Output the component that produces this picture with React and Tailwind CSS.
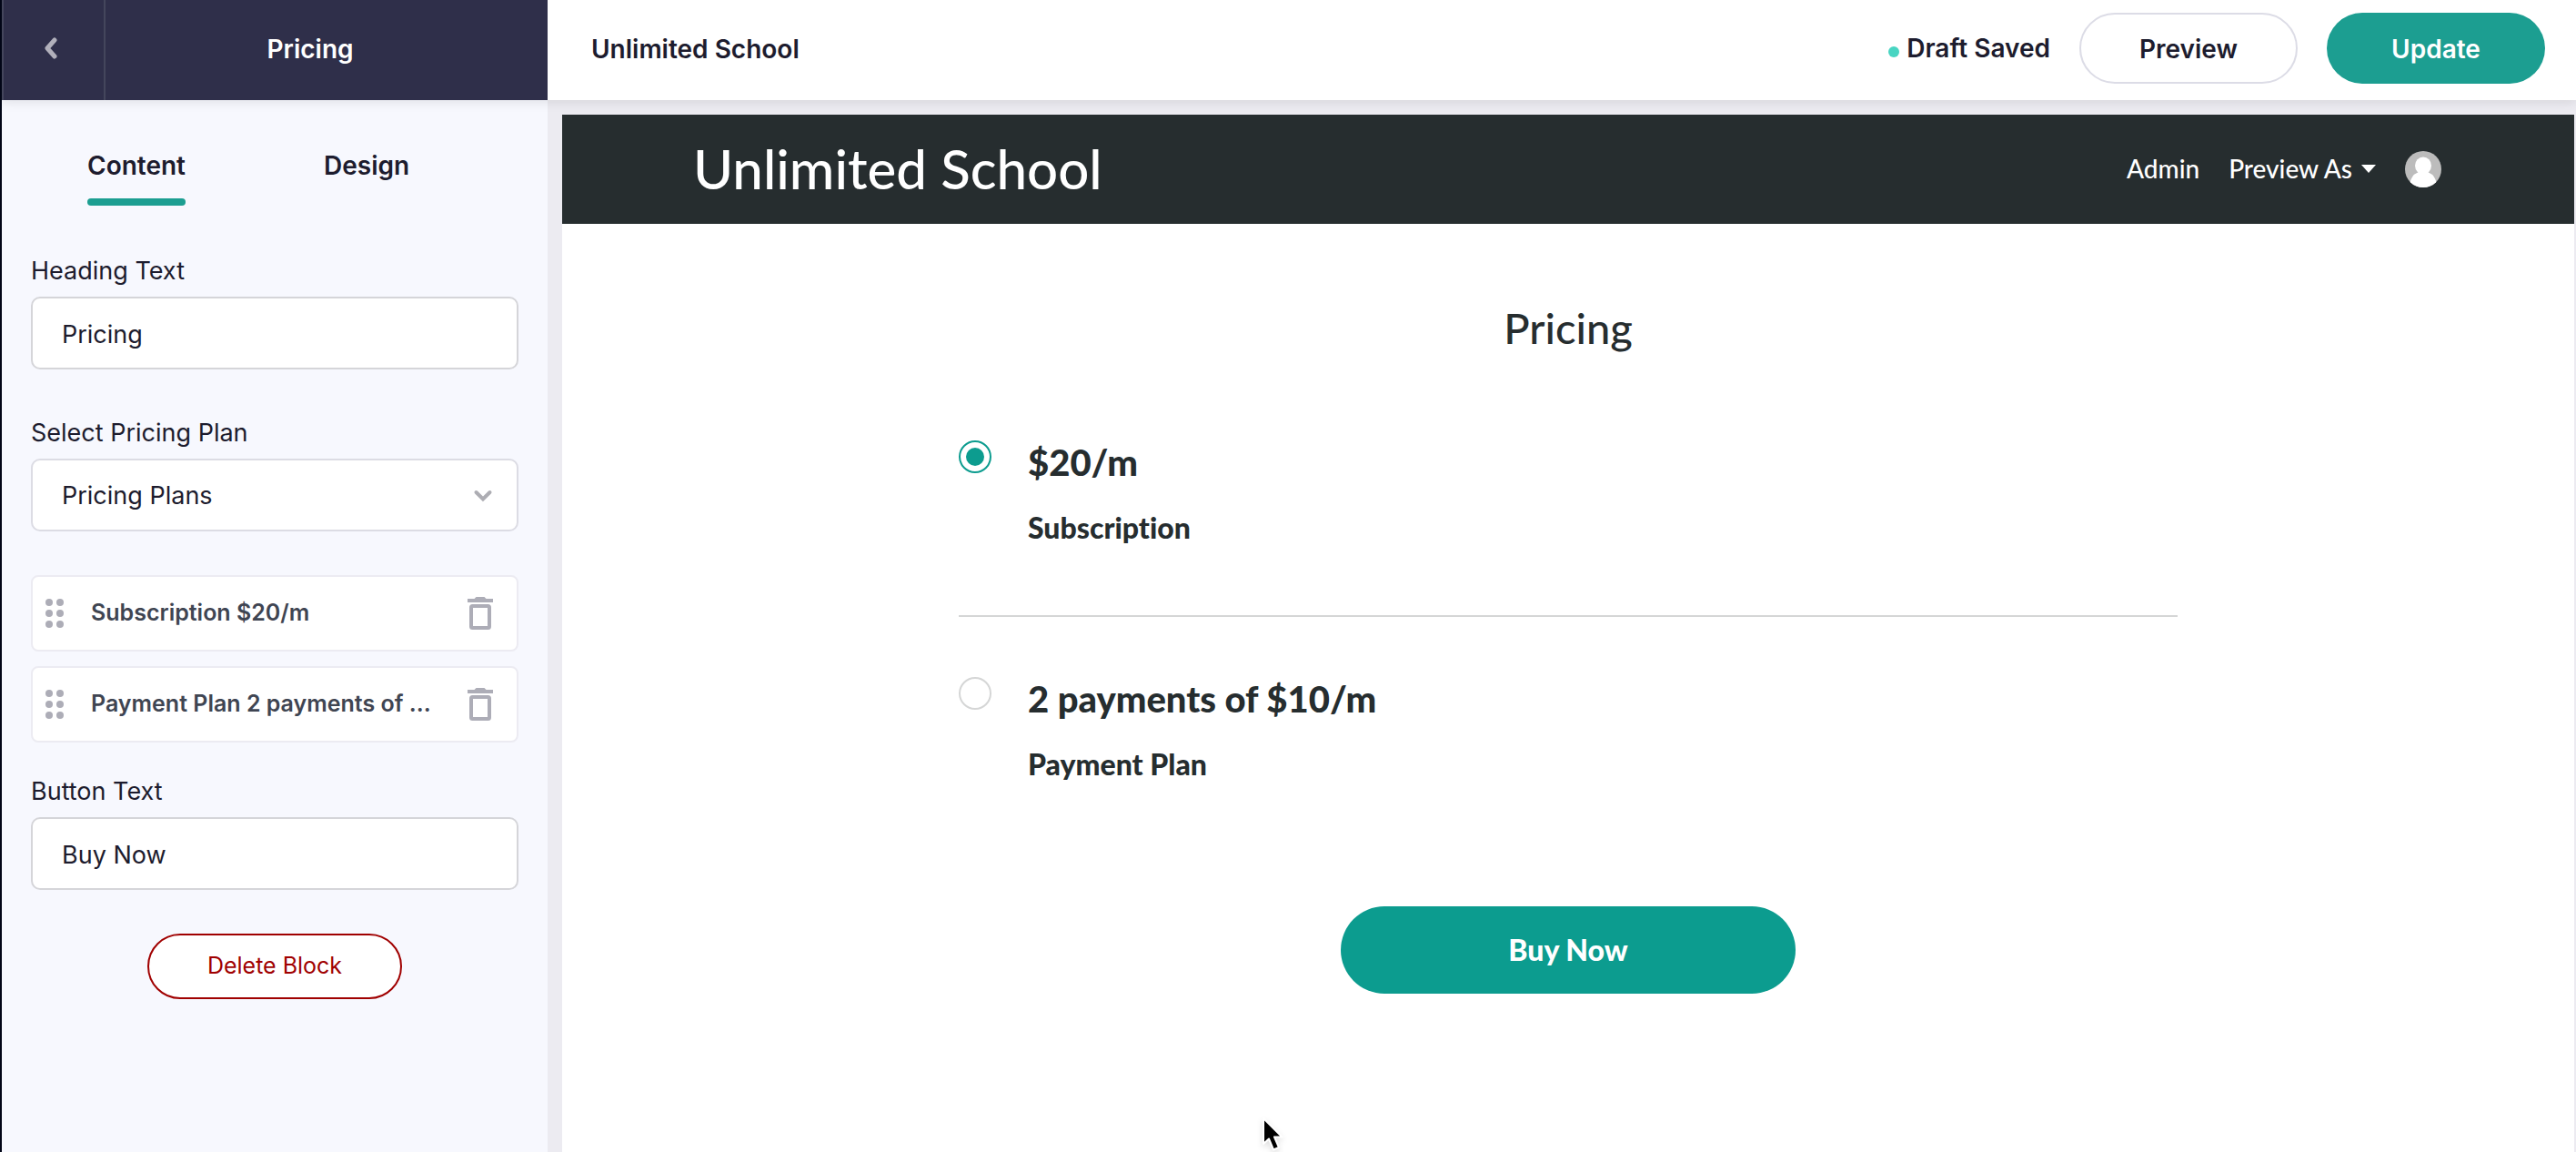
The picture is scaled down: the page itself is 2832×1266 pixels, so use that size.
import { useState } from "react";

const plans = [
  { id: "subscription", price: "$20/m", name: "Subscription", label: "Subscription $20/m" },
  { id: "payment-plan", price: "2 payments of $10/m", name: "Payment Plan", label: "Payment Plan 2 payments of ..." },
];

function BackIcon() {
  return (
    <svg width="16" height="24" viewBox="0 0 16 24" fill="none" aria-hidden="true">
      <path d="M12 3 4 12l8 9" stroke="#b1b0bb" strokeWidth="5" strokeLinecap="round" strokeLinejoin="round" />
    </svg>
  );
}

function DragDots() {
  return (
    <svg width="20" height="32" viewBox="0 0 20 32" fill="#adadb7" aria-hidden="true">
      {[4, 16, 28].map((y) => (
        <g key={y}>
          <circle cx="4" cy={y} r="4" />
          <circle cx="16" cy={y} r="4" />
        </g>
      ))}
    </svg>
  );
}

function TrashIcon() {
  return (
    <svg width="28" height="36" viewBox="0 0 28 36" fill="none" aria-hidden="true">
      <path d="M0 2h7.500l2-2h9l2 2H28v4H0z" fill="#adadb7" />
      <rect x="4" y="10" width="20" height="24" rx="1.500" stroke="#adadb7" strokeWidth="4" />
    </svg>
  );
}

function Avatar() {
  return (
    <svg width="40" height="40" viewBox="0 0 40 40" aria-hidden="true">
      <clipPath id="avatar-circle">
        <circle cx="20" cy="20" r="20" />
      </clipPath>
      <g clipPath="url(#avatar-circle)">
        <rect width="40" height="40" fill="#bcbcbc" />
        <ellipse cx="20" cy="16" rx="9" ry="9.500" fill="#fff" />
        <path d="M15 22h10c1 3 4 2 6 5s3.500 6 3.500 9v6h-29v-6c0-3 1.500-6 3.500-9s5-2 6-5z" fill="#fff" />
      </g>
    </svg>
  );
}

function TextField({ id, label, defaultValue }) {
  return (
    <div className="flex flex-col gap-2">
      <label htmlFor={id} className="text-[27px] leading-10">{label}</label>
      <input
        id={id}
        type="text"
        defaultValue={defaultValue}
        className="h-20 w-full rounded-[10px] border-2 border-[#d5d5d9] bg-white px-8 pt-0.5 text-[27px] outline-none"
      />
    </div>
  );
}

function Sidebar() {
  return (
    <aside className="w-[600px] shrink-0 bg-[#f7f8fe] px-8 pb-12">
      <div role="tablist" className="flex gap-[152px] pt-[54px] pl-[62px] text-[28px] leading-9 font-semibold">
        <button role="tab" aria-selected="true" className="flex flex-col gap-[18px]">
          Content
          <span className="h-2 w-full rounded-full bg-[#1c9e91]" />
        </button>
        <button role="tab" aria-selected="false" className="self-start">Design</button>
      </div>

      <div className="mt-[52px]">
        <TextField id="heading-text" label="Heading Text" defaultValue="Pricing" />
      </div>

      <div className="mt-[50px] flex flex-col gap-2">
        <label htmlFor="plan-select" className="text-[27px] leading-10">Select Pricing Plan</label>
        <div className="relative">
          <select
            id="plan-select"
            className="h-20 w-full appearance-none rounded-[10px] border-2 border-[#dcdce4] bg-white px-8 pt-0.5 text-[27px] outline-none"
          >
            <option>Pricing Plans</option>
          </select>
          <svg className="pointer-events-none absolute top-[34px] right-7" width="22" height="14" viewBox="0 0 22 14" fill="none" aria-hidden="true">
            <path d="m3.500 3 7.500 7.500L18.500 3" stroke="#adadb3" strokeWidth="4" strokeLinecap="round" />
          </svg>
        </div>
      </div>

      <ul className="mt-12 flex flex-col gap-4">
        {plans.map((plan) => (
          <li key={plan.id} className="flex h-[84px] items-center rounded-lg border-2 border-[#ecebf2] bg-white pr-[26px] pl-[14px]">
            <button aria-label="Reorder" className="shrink-0"><DragDots /></button>
            <span className="ml-[30px] flex-1 text-[25px] font-semibold whitespace-nowrap text-[#3f4552]">{plan.label}</span>
            <button aria-label={`Remove ${plan.name}`} className="shrink-0"><TrashIcon /></button>
          </li>
        ))}
      </ul>

      <div className="mt-[34px]">
        <TextField id="button-text" label="Button Text" defaultValue="Buy Now" />
      </div>

      <button className="mx-auto mt-12 flex h-[72px] w-[280px] items-center justify-center rounded-full border-2 border-[#a00000] bg-white text-[25px] text-[#a00000]">
        Delete Block
      </button>
    </aside>
  );
}

function Cursor() {
  return (
    <svg className="pointer-events-none fixed bottom-0 left-[1386px] drop-shadow-md" width="26" height="38" viewBox="0 0 26 38" aria-hidden="true">
      <path d="M3 1v28l6-5.500 5 12 6-2.500-5-11.500h8.500z" fill="#000" stroke="#fff" strokeWidth="2" strokeLinejoin="round" />
    </svg>
  );
}

function Preview() {
  const [selected, setSelected] = useState("subscription");
  return (
    <div className="flex flex-1 flex-col bg-[#ecebf1] pt-4 pr-0.5 pl-4 font-['Lato',sans-serif] font-medium text-[#262d2f] [font-variant-ligatures:none]">
      <header className="flex h-[120px] items-center justify-between bg-[#262d2f] pr-[146px] pl-36 text-white">
        <h1 className="pb-0.5 text-[60px] leading-none font-medium">Unlimited School</h1>
        <nav className="flex items-center gap-8 text-[28px]">
          <a href="#admin" className="pb-0.5">Admin</a>
          <button className="flex items-center gap-2.5 pb-0.5">
            Preview As
            <svg width="16" height="9" viewBox="0 0 16 9" fill="#fff" aria-hidden="true"><path d="M0 0h16L8 9z" /></svg>
          </button>
          <button aria-label="Account"><Avatar /></button>
        </nav>
      </header>

      <main className="flex flex-1 flex-col items-center bg-white pt-[84px] pb-24">
        <h2 className="text-[47px] leading-[60px] font-medium">Pricing</h2>
        <fieldset aria-label="Pricing plan" className="mt-[94px] w-full max-w-[1340px]">
          {plans.map((plan, i) => (
            <div key={plan.id} className={i === 0 ? "border-b-2 border-[#d5d6d6] pb-[76px]" : "pt-[66px]"}>
              <label className="flex items-start gap-10 font-black">
                <input
                  type="radio"
                  name="plan"
                  value={plan.id}
                  checked={selected === plan.id}
                  onChange={() => setSelected(plan.id)}
                  className="grid size-9 shrink-0 appearance-none place-items-center rounded-full border-2 border-[#d5d6d6] bg-white checked:border-[#0c9c8f] checked:before:size-5 checked:before:rounded-full checked:before:bg-[#0c9c8f] checked:before:content-['']"
                />
                <span className="flex flex-col gap-7">
                  <span className="text-[40px] leading-[48px]">{plan.price}</span>
                  <span className="text-[32px] leading-10">{plan.name}</span>
                </span>
              </label>
            </div>
          ))}
        </fieldset>
        <button className="mt-[136px] h-24 w-[500px] rounded-full bg-[#0c9c8f] text-[32px] font-black text-white">Buy Now</button>
      </main>
    </div>
  );
}

export default function App() {
  return (
    <div className="flex min-h-screen flex-col border-l-2 border-[#020617] font-['Inter',sans-serif] text-[#1d1c2e]">
      <header className="relative z-10 flex h-[110px] shadow-[0_2px_12px_rgba(0,0,0,0.1)]">
        <div className="flex w-[600px] shrink-0 border-l-2 border-[#44465c] bg-[#2f2f4a]">
          <button aria-label="Back" className="flex w-28 items-center border-r-2 border-[#44465c] pb-1 pl-11">
            <BackIcon />
          </button>
          <div className="flex flex-1 items-center justify-center pr-9 pb-0.5 text-[28px] font-semibold text-white">Pricing</div>
        </div>
        <div className="flex flex-1 items-center justify-between bg-white pr-[34px] pl-12 text-[28px] font-semibold">
          <span className="pb-0.5">Unlimited School</span>
          <div className="flex h-full items-start gap-8 pt-[14px]">
            <div className="flex h-[78px] items-center gap-2">
              <span className="mt-2 size-3 rounded-full bg-[#48d5c2]" />
              Draft Saved
            </div>
            <button className="h-[78px] w-60 rounded-full border-2 border-[#dcdce6] bg-white pt-0.5">Preview</button>
            <button className="h-[78px] w-60 rounded-full bg-[#1c9e91] pt-0.5 text-white">Update</button>
          </div>
        </div>
      </header>
      <div className="flex flex-1">
        <Sidebar />
        <Preview />
      </div>
      <Cursor />
    </div>
  );
}
